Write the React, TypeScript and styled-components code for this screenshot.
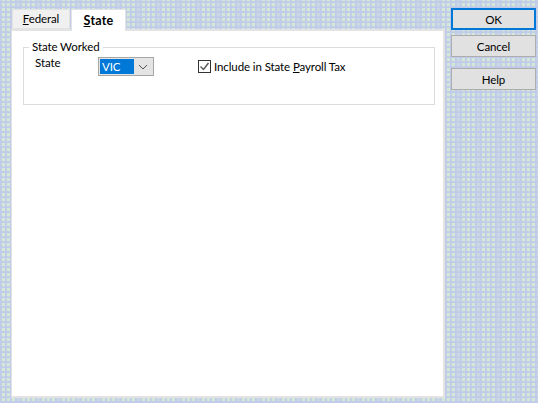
import React from 'react';
import styled, { createGlobalStyle } from 'styled-components';

const GlobalStyle = createGlobalStyle`
  html, body { margin: 0; padding: 0; }
  body { font-family: Lato, "Liberation Sans", sans-serif; font-size: 11.5px; letter-spacing: -0.1px; color: #000; }
  u { text-underline-offset: 1px; }
`;

const Dialog = styled.div`
  width: 538px;
  height: 403px;
  box-sizing: border-box;
  padding: 8px 2px 5px 11px;
  display: flex;
  gap: 6px;
  overflow: hidden;
  background-color: #c2cae9;
  background-image:
    repeating-linear-gradient(90deg, #c2cae9 0 1px, rgba(194, 202, 233, 0.8) 1px 2px, transparent 2px 5px),
    repeating-linear-gradient(0deg, #c2cae9 0 1px, rgba(194, 202, 233, 0.8) 1px 2px, transparent 2px 5px),
    repeating-linear-gradient(90deg, #d2e9d8 0 15px, #cad8e4 15px 20px);
`;

const Main = styled.div`
  width: 434px;
  margin-top: 1px;
  display: flex;
  flex-direction: column;
`;

const TabBar = styled.div`
  display: flex;
  align-items: flex-end;
  height: 22px;
  padding-left: 1px;
  gap: 1px;
  margin-bottom: -2px;
  position: relative;
  z-index: 1;
`;

const Tab = styled.div<{ $active?: boolean }>`
  box-sizing: border-box;
  width: ${p => (p.$active ? 55 : 58)}px;
  height: ${p => (p.$active ? 22 : 20)}px;
  margin-bottom: ${p => (p.$active ? 0 : 2)}px;
  padding-bottom: 1px;
  background: ${p => (p.$active ? '#fff' : '#f0f0f0')};
  border: 1px solid #e3e3e3;
  border-bottom: ${p => (p.$active ? 'none' : '1px solid #e3e3e3')};
  display: flex;
  align-items: center;
  justify-content: center;
  font-size: ${p => (p.$active ? 12.5 : 11.5)}px;
  font-weight: ${p => (p.$active ? 700 : 400)};
  letter-spacing: ${p => (p.$active ? 0.2 : -0.1)}px;
`;

const Panel = styled.div`
  flex: 1;
  box-sizing: border-box;
  background: #fff;
  border: 2px solid #e3e3e3;
  border-left-width: 1px;
  padding: 9px 8px 0 11px;
`;

const Group = styled.fieldset`
  box-sizing: border-box;
  height: 65px;
  margin: 0;
  padding: 0 0 0 11px;
  border: 1px solid #dcdcdc;
  display: flex;
  align-items: flex-start;
`;

const Legend = styled.legend`
  padding: 0 3px;
  margin-left: -6px;
  line-height: 14px;
`;

const FieldLabel = styled.span`
  width: 63px;
  line-height: 16px;
  margin-top: 1px;
`;

const Select = styled.div`
  box-sizing: border-box;
  width: 56px;
  height: 19px;
  margin-top: 3px;
  border: 1px solid #a6a6a6;
  padding: 1px;
  display: flex;
  background: #e4e4e4;
`;

const SelectValue = styled.span`
  width: 34px;
  background: #0078d7;
  color: #fff;
  line-height: 15px;
  padding-left: 2px;
  box-sizing: border-box;
`;

const SelectArrow = styled.span`
  flex: 1;
  display: flex;
  align-items: center;
  justify-content: center;
`;

const CheckRow = styled.label`
  margin: 3px 0 0 44px;
  display: flex;
  align-items: center;
  gap: 3px;
  height: 19px;
`;

const CheckBox = styled.span`
  box-sizing: border-box;
  width: 13px;
  height: 13px;
  border: 1px solid #333;
  background: #fff;
  display: flex;
  align-items: center;
  justify-content: center;
`;

const Side = styled.div`
  width: 85px;
  display: flex;
  flex-direction: column;
`;

const Button = styled.button<{ $primary?: boolean; $gap?: number }>`
  box-sizing: border-box;
  width: 85px;
  height: 22px;
  margin-top: ${p => p.$gap ?? 0}px;
  padding: 0;
  font: inherit;
  letter-spacing: inherit;
  color: #000;
  background: #e1e1e1;
  border: ${p => (p.$primary ? '2px solid #0078d7' : '1px solid #adadad')};
`;

export default function App() {
  return (
    <>
      <GlobalStyle />
      <Dialog>
        <Main>
          <TabBar>
            <Tab><span><u>F</u>ederal</span></Tab>
            <Tab $active><span><u>S</u>tate</span></Tab>
          </TabBar>
          <Panel>
            <Group>
              <Legend>State Worked</Legend>
              <FieldLabel>State</FieldLabel>
              <Select>
                <SelectValue>VIC</SelectValue>
                <SelectArrow>
                  <svg width="10" height="6" viewBox="0 0 10 6">
                    <path d="M1 1l4 4 4-4" fill="none" stroke="#555" strokeWidth="1" />
                  </svg>
                </SelectArrow>
              </Select>
              <CheckRow>
                <CheckBox>
                  <svg width="11" height="11" viewBox="0 0 11 11">
                    <path d="M1.5 5.5l3 3 5-6.5" fill="none" stroke="#555" strokeWidth="1.4" />
                  </svg>
                </CheckBox>
                <span>Include in State <u>P</u>ayroll Tax</span>
              </CheckRow>
            </Group>
          </Panel>
        </Main>
        <Side>
          <Button $primary>OK</Button>
          <Button $gap={5}>Cancel</Button>
          <Button $gap={11}>Help</Button>
        </Side>
      </Dialog>
    </>
  );
}
